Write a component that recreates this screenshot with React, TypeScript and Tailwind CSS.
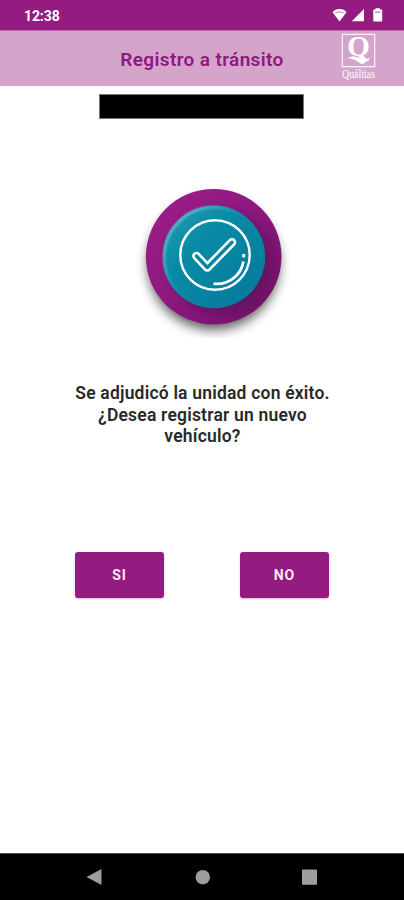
import React from 'react';

function StatusBar() {
  return (
    <div className="flex h-[30px] items-center justify-between bg-[#941b80] pl-[24px] pr-[21px] text-white">
      <span className="pt-[2px] text-[14px] leading-none font-bold tracking-[-0.1px]">12:38</span>
      <svg width="52" height="16" viewBox="0 0 52 16" fill="white">
        <path d="M1.500 5.200C4.500 1 12.500 1 15.500 5.200L8.500 14.500Z" />
        <path d="M4.500 5.800Q8.500 3.800 12.500 5.800" fill="none" stroke="#941b80" strokeWidth="1" opacity=".6" />
        <path d="M20.800 14.300 33 2v12.300Z" />
        <path d="M43 2.500h1.500V1.300h4.500v1.200h1.500q.7 0 .7.800v10.400q0 .8-.7.800h-7.500q-.7 0-.7-.800V3.300q0-.8.700-.8Z" />
        <path d="M44 5.200h5.500" stroke="#941b80" strokeWidth="1.200" opacity=".6" />
      </svg>
    </div>
  );
}

function Logo() {
  return (
    <svg width="36" height="52" viewBox="0 0 36 52" className="overflow-visible" fill="white">
      <rect x="1.300" y="1.300" width="32.400" height="32.400" fill="none" stroke="white" strokeWidth="1.100" />
      <text x="17.600" y="23.400" textAnchor="middle" fontSize="29" fontWeight="700" fontFamily="Liberation Serif, serif">Q</text>
      <path d="M6.800 25.200C11 22.600 15.500 23.400 19.500 25.800C23 27.800 25.500 27.200 28.800 24.800L28.800 26.200L22.300 30.800Q21 31.600 19.500 30.400C15.500 27.600 12 25.300 6.800 25.200Z" />
      <text x="17.500" y="45.200" textAnchor="middle" fontSize="12" textLength="33" lengthAdjust="spacingAndGlyphs" fontFamily="Liberation Serif, serif">Quálitas</text>
    </svg>
  );
}

function Header() {
  return (
    <header className="grid h-[56px] grid-cols-[80px_1fr_80px] border-t border-[#b564aa] bg-[#d4a4cb]">
      <span />
      <h1 className="pt-[16px] text-center text-[19px] leading-[26px] font-semibold tracking-[0.36px] whitespace-nowrap text-[#8f1980]">
        Registro a tránsito
      </h1>
      <div className="pt-[2px] pl-[17px]">
        <Logo />
      </div>
    </header>
  );
}

function SuccessBadge() {
  return (
    <svg width="180" height="158" viewBox="124 180 180 158" className="block">
      <defs>
        <linearGradient id="purple" x1="0" y1="0" x2="1" y2="1">
          <stop offset="0" stopColor="#a01e8b" />
          <stop offset=".5" stopColor="#8c197e" />
          <stop offset="1" stopColor="#701168" />
        </linearGradient>
        <linearGradient id="teal" x1=".1" y1=".1" x2=".85" y2=".9">
          <stop offset="0" stopColor="#2098af" />
          <stop offset=".35" stopColor="#078aa5" />
          <stop offset="1" stopColor="#077b9c" />
        </linearGradient>
        <linearGradient id="shine" x1="0" y1=".1" x2=".5" y2=".5">
          <stop offset="0" stopColor="#91d5df" />
          <stop offset="1" stopColor="#91d5df" stopOpacity="0" />
        </linearGradient>
        <filter id="soft" x="-30%" y="-30%" width="160%" height="160%">
          <feGaussianBlur stdDeviation="6" />
        </filter>
        <filter id="edge" x="-10%" y="-10%" width="120%" height="120%">
          <feGaussianBlur stdDeviation="1.300" />
        </filter>
        <clipPath id="disc">
          <circle cx="213.700" cy="256.700" r="67.800" />
        </clipPath>
      </defs>
      <circle cx="213.500" cy="264" r="66" fill="#000" opacity=".62" filter="url(#soft)" />
      <circle cx="213.700" cy="256.700" r="67.800" fill="url(#purple)" />
      <g clipPath="url(#disc)">
        <circle cx="221" cy="262" r="51" fill="#3d0842" opacity=".42" filter="url(#soft)" />
      </g>
      <circle cx="213.900" cy="256.900" r="51.300" fill="url(#teal)" />
      <circle cx="213.900" cy="256.900" r="49.600" fill="none" stroke="url(#shine)" strokeWidth="2.500" filter="url(#edge)" opacity=".8" />
      <g fill="none" stroke="white" strokeLinecap="round" strokeLinejoin="round">
        <circle cx="215" cy="255" r="34.700" strokeWidth="2.400" />
        <path d="M196.500 256 207.300 267.500 232 242.300" strokeWidth="8.600" />
        <path d="M196.500 256 207.300 267.500 232 242.300" stroke="#07849f" strokeWidth="3.400" />
        <path d="M213.500 283.600A26.500 26.500 0 0 0 243.400 261.500" strokeWidth="2.800" strokeLinecap="butt" />
      </g>
      <rect x="242.200" y="254" width="3" height="3.400" rx=".6" fill="white" />
    </svg>
  );
}

function ActionButton({ label }: { label: string }) {
  return (
    <button className="h-[46px] w-[89px] rounded-[3px] bg-[#941b80] pt-[1px] text-[14px] font-bold tracking-[0.9px] text-[#fbeaf8] shadow-[0_1px_2px_rgba(120,20,105,0.3)]">
      {label}
    </button>
  );
}

function NavigationBar() {
  return (
    <nav className="flex h-[47px] items-center border-t border-[#505050] bg-black pl-[86px]">
      <svg width="234" height="18" viewBox="0 0 234 18" fill="#9d9d9d">
        <path d="M.5 9 15.500 1v16Z" />
        <circle cx="116.800" cy="9.200" r="7.200" />
        <rect x="216" y="1.500" width="15" height="15.200" rx=".5" />
      </svg>
    </nav>
  );
}

export default function App() {
  return (
    <div className="flex h-[900px] w-[404px] flex-col bg-white font-[Roboto,sans-serif]">
      <StatusBar />
      <Header />
      <main className="flex flex-1 flex-col">
        <div className="mt-[8px] ml-[99px] h-[25px] w-[205px] border border-[#777] bg-black" />
        <div className="mt-[61px] ml-[124px]">
          <SuccessBadge />
        </div>
        <p className="mt-[45px] ml-px text-center text-[17.500px] leading-[21.500px] font-semibold tracking-[0.2px] text-[#292929]">
          Se adjudicó la unidad con éxito.
          <br />
          ¿Desea registrar un nuevo
          <br />
          vehículo?
        </p>
        <div className="mt-[104px] ml-[75px] flex gap-[76px]">
          <ActionButton label="SI" />
          <ActionButton label="NO" />
        </div>
      </main>
      <NavigationBar />
    </div>
  );
}
